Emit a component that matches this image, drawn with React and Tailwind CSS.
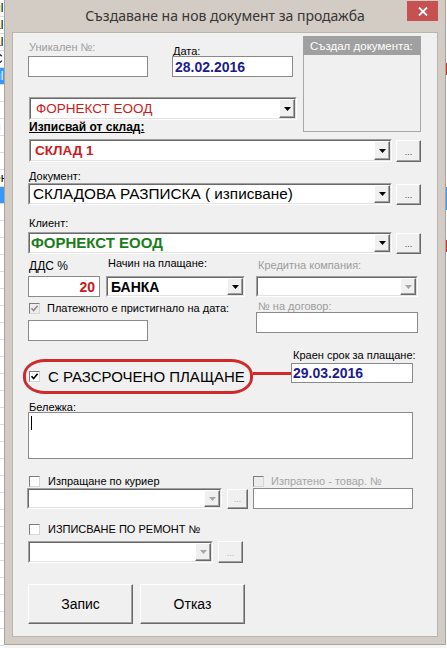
import React from "react";

const FONT = "font-['Liberation_Sans',Arial,sans-serif]";

function Arrow({ disabled }) {
  return (
    <svg width="7" height="4" viewBox="0 0 7 4">
      <path d="M0 0H7L3.5 4Z" fill={disabled ? "#a6a6a6" : "#000"} />
    </svg>
  );
}

function Combo({ cls, children, disabled }) {
  return (
    <div className={`${cls} flex shrink-0 border border-t-[#a0a0a0] border-l-[#a0a0a0] border-r-white border-b-white`}>
      <div className="flex-1 min-w-0 flex border border-t-[#696969] border-l-[#696969] border-r-[#e3e3e3] border-b-[#e3e3e3] bg-white">
        <div className="flex-1 min-w-0 flex items-center pl-[3px] overflow-hidden whitespace-nowrap">{children}</div>
        <div className="w-[16px] shrink-0 flex items-center justify-center bg-[#f0f0f0] border border-t-white border-l-white border-r-[#696969] border-b-[#696969] shadow-[inset_-1px_-1px_0_#a0a0a0]">
          <Arrow disabled={disabled} />
        </div>
      </div>
    </div>
  );
}

function Dots({ cls, disabled }) {
  return (
    <div
      className={`${cls} shrink-0 flex items-end justify-center pb-[4px] bg-[#f0f0f0] border border-t-white border-l-white border-r-[#696969] border-b-[#696969] shadow-[inset_-1px_-1px_0_#a0a0a0] text-[9px] leading-none ${
        disabled ? "text-[#a8a8a8]" : "text-[#444]"
      }`}
    >
      ...
    </div>
  );
}

function Check({ checked, disabled }) {
  return (
    <div
      className={`w-[11px] h-[11px] shrink-0 flex items-center justify-center border border-t-[#7d7d7d] border-l-[#7d7d7d] border-r-[#d6d6d6] border-b-[#d6d6d6] ${
        disabled ? "bg-[#ececec]" : "bg-white"
      }`}
    >
      {checked && (
        <svg width="9" height="9" viewBox="0 0 9 9">
          <path d="M1.5 4.2L3.6 6.5L7.6 1.8" fill="none" stroke={disabled ? "#8c8c8c" : "#000"} strokeWidth="1.6" />
        </svg>
      )}
    </div>
  );
}

function Input({ cls, children }) {
  return <div className={`${cls} shrink-0 border border-[#8a8a8a] bg-white flex items-center overflow-hidden whitespace-nowrap`}>{children}</div>;
}

const bgRows = Array.from({ length: 38 }, (_, i) => i);
const bgText = ["ul", "al", "al", "C", "ul", "", "", "я", "", "", "ен", "", "", "", "", "", "", "", "", "", ""];

export default function App() {
  return (
    <div className={`w-[447px] h-[648px] bg-[#f4f4f4] flex overflow-hidden ${FONT}`}>
      {/* background app, left strip */}
      <div className="w-[4px] h-[648px] shrink-0 bg-white flex flex-col overflow-hidden">
        {bgRows.map((i) => (
          <div
            key={i}
            className={`h-[17px] shrink-0 border-b border-[#dadada] text-[12px] leading-[16px] whitespace-nowrap -ml-[6px] ${
              i === 4 || i === 11 ? "bg-[#3399ff] text-white" : "text-black"
            }`}
          >
            {bgText[i] || ""}
          </div>
        ))}
      </div>

      {/* dialog */}
      <div className="w-[442px] h-[645px] shrink-0 bg-[#d3ccc4] border-l border-r border-b border-[#aaa39b] flex flex-col px-[7px] pb-[7px]">
        {/* title bar */}
        <div className="relative h-[32px] shrink-0 flex justify-center pt-[6px]">
          <div className="font-['Noto_Sans','Open_Sans',sans-serif] text-[14px] leading-[20px] text-[#363636]">
            Създаване на нов документ за продажба
          </div>
          <div className="absolute right-0 top-[1px] w-[31px] h-[20px] bg-[#c75050] flex items-center justify-center">
            <svg width="10" height="9" viewBox="0 0 10 9">
              <path d="M1 0.5L9 8.5M9 0.5L1 8.5" stroke="#fff" strokeWidth="1.8" />
            </svg>
          </div>
        </div>

        {/* client area */}
        <div className="flex-1 bg-[#f0f0f0] border border-[#bcb5ad] pl-[15px] flex flex-col text-[11px] leading-[12px] text-black">
          {/* section A */}
          <div className="h-[100px] shrink-0 flex">
            <div className="w-[269px] shrink-0 flex flex-col">
              <div className="flex">
                <div className="w-[120px] flex flex-col">
                  <div className="h-[23px] pt-[8px] pl-[1px] text-[#9c9c9c]">Уникален №:</div>
                  <Input cls="w-[120px] h-[21px]" />
                </div>
                <div className="ml-[24px] w-[121px] flex flex-col">
                  <div className="h-[23px] pt-[12px] pl-[1px]">Дата:</div>
                  <Input cls="w-[121px] h-[21px] pl-[2px]">
                    <span className="text-[14px] font-bold text-[#1c1c8f]">28.02.2016</span>
                  </Input>
                </div>
              </div>
              <Combo cls="mt-[20px] ml-[1px] w-[268px] h-[23px]">
                <span className="text-[13.5px] text-[#cc1b1b] pl-[2px]">ФОРНЕКСТ ЕООД</span>
              </Combo>
              <div className="mt-[1px] pl-[1px] text-[12px] leading-[12px] font-bold underline">Изписвай от склад:</div>
            </div>
            <div className="ml-[6px] mt-[3px] w-[118px] h-[96px] shrink-0 flex flex-col border border-[#a8a8a8] border-t-0 bg-[#f0f0f0]">
              <div className="h-[19px] -mx-[1px] bg-[#a0a0a0] text-white text-[11.5px] pl-[7px] pt-[4px] whitespace-nowrap">Създал документа:</div>
            </div>
          </div>

          {/* склад */}
          <div className="mt-[6px] flex items-center">
            <Combo cls="ml-[1px] w-[363px] h-[23px]">
              <span className="text-[13.5px] font-bold text-[#cc1b1b] pl-[1px]">СКЛАД 1</span>
            </Combo>
            <Dots cls="ml-[4px] w-[25px] h-[22px]" />
          </div>

          {/* документ */}
          <div className="mt-[8px] pl-[1px]">Документ:</div>
          <div className="mt-[1px] flex items-center">
            <Combo cls="w-[364px] h-[22px]">
              <span className="text-[15.3px] text-black">СКЛАДОВА РАЗПИСКА ( изписване)</span>
            </Combo>
            <Dots cls="ml-[4px] w-[25px] h-[21px]" />
          </div>

          {/* клиент */}
          <div className="mt-[12px] pl-[1px]">Клиент:</div>
          <div className="mt-[3px] flex items-center">
            <Combo cls="w-[364px] h-[22px]">
              <span className="text-[15px] font-bold text-[#1b7d1b] -ml-[2px]">ФОРНЕКСТ ЕООД</span>
            </Combo>
            <Dots cls="ml-[4px] w-[25px] h-[21px]" />
          </div>

          {/* section B */}
          <div className="mt-[3px] flex">
            <div className="w-[217px] shrink-0 flex flex-col">
              <div className="flex">
                <div className="w-[72px] flex flex-col">
                  <div className="h-[19px] pt-[3px] pl-[1px] text-[12px]">ДДС %</div>
                  <Input cls="w-[72px] h-[21px] bg-[#fdf6ea] justify-end pr-[4px]">
                    <span className="text-[14px] font-bold text-[#c81818]">20</span>
                  </Input>
                </div>
                <div className="ml-[6px] w-[139px] flex flex-col">
                  <div className="h-[19px] pl-[2px]">Начин на плащане:</div>
                  <Combo cls="w-[139px] h-[21px]">
                    <span className="text-[14px] font-bold">БАНКА</span>
                  </Combo>
                </div>
              </div>
              <div className="mt-[5px] h-[12px] flex items-center">
                <div className="ml-[1px]">
                  <Check checked disabled />
                </div>
                <div className="ml-[7px]">Платежното е пристигнало на дата:</div>
              </div>
              <Input cls="mt-[6px] w-[120px] h-[21px]" />
            </div>
            <div className="ml-[11px] w-[162px] shrink-0 flex flex-col">
              <div className="h-[19px] pt-[2px] pl-[2px] text-[#9c9c9c]">Кредитна компания:</div>
              <Combo cls="w-[162px] h-[21px]" disabled />
              <div className="mt-[3px] h-[12px] pl-[2px] text-[#9c9c9c]">№ на договор:</div>
              <Input cls="w-[162px] h-[21px]" />
            </div>
          </div>

          {/* section C */}
          <div className="mt-[8px] flex items-start">
            <div className="-ml-[5px] mt-[10px] w-[230px] h-[35px] shrink-0 border-[3px] border-[#d12a2a] rounded-[22px/16px] flex items-center pl-[3px]">
              <Check checked />
              <div className="ml-[8px] text-[15px] leading-[16px] whitespace-nowrap">С РАЗСРОЧЕНО ПЛАЩАНЕ</div>
            </div>
            <div className="mt-[23px] w-[38px] h-[3px] shrink-0 bg-[#d12a2a]" />
            <div className="w-[122px] shrink-0 flex flex-col">
              <div className="h-[13px] pl-[2px] whitespace-nowrap">Краен срок за плащане:</div>
              <Input cls="mt-[1px] w-[122px] h-[20px] pl-[1px]">
                <span className="text-[14px] font-bold text-[#1c1c8f]">29.03.2016</span>
              </Input>
            </div>
          </div>

          {/* бележка */}
          <div className="mt-[7px] h-[11px] pl-[1px]">Бележка:</div>
          <div className="w-[385px] h-[47px] shrink-0 border border-[#8a8a8a] bg-white pl-[2px] pt-[3px]">
            <div className="w-[1px] h-[14px] bg-black" />
          </div>

          {/* куриер */}
          <div className="mt-[16px] h-[12px] flex items-center">
            <div className="w-[225px] shrink-0 flex items-center">
              <div className="ml-[1px]">
                <Check />
              </div>
              <div className="ml-[8px]">Изпращане по куриер</div>
            </div>
            <Check disabled />
            <div className="ml-[7px] text-[#a4a4a4]">Изпратено - товар. №</div>
          </div>
          <div className="mt-[1px] flex items-center">
            <Combo cls="-ml-[1px] w-[195px] h-[21px]" disabled />
            <Dots cls="ml-[5px] w-[21px] h-[20px]" disabled />
            <Input cls="ml-[5px] w-[160px] h-[21px]" />
          </div>

          {/* ремонт */}
          <div className="mt-[14px] h-[12px] flex items-center">
            <div className="ml-[1px]">
              <Check />
            </div>
            <div className="ml-[8px]">ИЗПИСВАНЕ ПО РЕМОНТ №</div>
          </div>
          <div className="mt-[6px] flex items-center">
            <Combo cls="w-[185px] h-[22px]" disabled />
            <Dots cls="ml-[5px] w-[25px] h-[22px]" disabled />
          </div>

          {/* buttons */}
          <div className="mt-[21px] flex">
            <div className="w-[105px] h-[40px] flex items-center justify-center bg-[#f0f0f0] border border-t-white border-l-white border-r-[#696969] border-b-[#696969] shadow-[inset_-1px_-1px_0_#a0a0a0] text-[14px] leading-[16px]">
              Запис
            </div>
            <div className="ml-[7px] w-[105px] h-[40px] flex items-center justify-center bg-[#f0f0f0] border border-t-white border-l-white border-r-[#696969] border-b-[#696969] shadow-[inset_-1px_-1px_0_#a0a0a0] text-[14px] leading-[16px]">
              Отказ
            </div>
          </div>
        </div>
      </div>

      {/* background app, right strip */}
      <div className="w-[1px] h-[648px] shrink-0 bg-white flex flex-col">
        <div className="mt-[63px] h-[12px] bg-[#d43030]" />
        <div className="mt-[112px] h-[23px] bg-[#3399ff]" />
        <div className="mt-[30px] h-[12px] bg-[#d43030]" />
      </div>
    </div>
  );
}
